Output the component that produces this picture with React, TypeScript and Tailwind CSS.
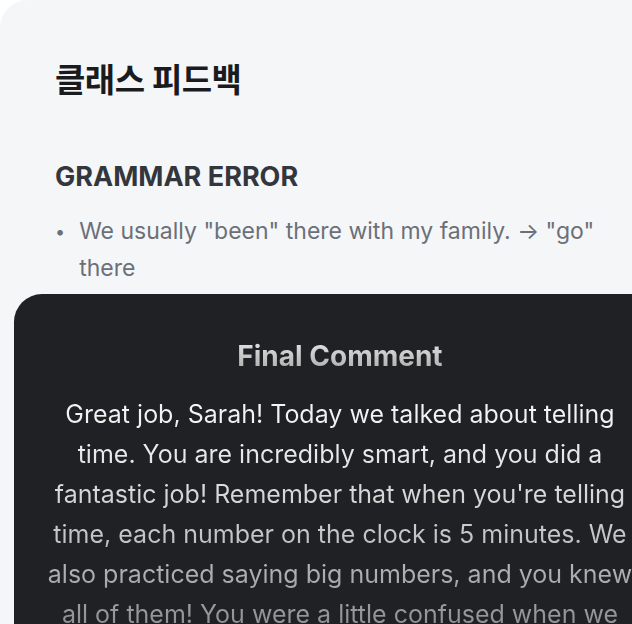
const feedback = {
  title: '클래스 피드백',
  section: 'GRAMMAR ERROR',
  errors: ['We usually "been" there with my family. → "go" there'],
  comment:
    "Great job, Sarah! Today we talked about telling time. You are incredibly smart, and you did a fantastic job! Remember that when you're telling time, each number on the clock is 5 minutes. We also practiced saying big numbers, and you knew all of them! You were a little confused when we talked about the difference between fifteen and fifty, but you got it in the end.",
}

export default function App() {
  return (
    <div
      className="w-[632px] h-[624px] overflow-hidden bg-white"
      style={{ fontFamily: 'Inter, "Noto Sans CJK KR", sans-serif' }}
    >
      <div className="w-[680px] min-h-[624px] bg-[#f5f6f8] rounded-tl-[28px] pt-[58px]">
        <h1 className="pl-[55px] text-[33px] font-bold leading-[44px] text-[#1a1b1e] tracking-[-0.5px]">
          {feedback.title}
        </h1>

        <h2 className="pl-[55px] mt-[58px] text-[27px] font-bold leading-[34px] text-[#33373d]">
          {feedback.section}
        </h2>

        <ul className="pl-[55px] pr-[80px] mt-[19px]">
          {feedback.errors.map((e) => (
            <li key={e} className="flex gap-[14px] text-[23px] leading-[37px] text-[#6b7078]">
              <span className="shrink-0 text-[18px]">•</span>
              <span>{e}</span>
            </li>
          ))}
        </ul>

        <div className="ml-[14px] mt-[7px] w-[652px] h-[400px] bg-[#1f2125] rounded-t-[28px] px-[31px] pt-[42px]">
          <h3 className="text-center text-[28px] font-bold leading-[40px] bg-gradient-to-b from-[#ececec] to-[#a4a4a4] bg-clip-text text-transparent">
            Final Comment
          </h3>
          <p className="mt-[18px] text-center text-[25px] leading-[40px] bg-[linear-gradient(to_bottom,#f6f6f6_0px,#ececec_50px,#c6c6c6_140px,#7c7e82_260px)] bg-clip-text text-transparent">
            {feedback.comment}
          </p>
        </div>
      </div>
    </div>
  )
}
